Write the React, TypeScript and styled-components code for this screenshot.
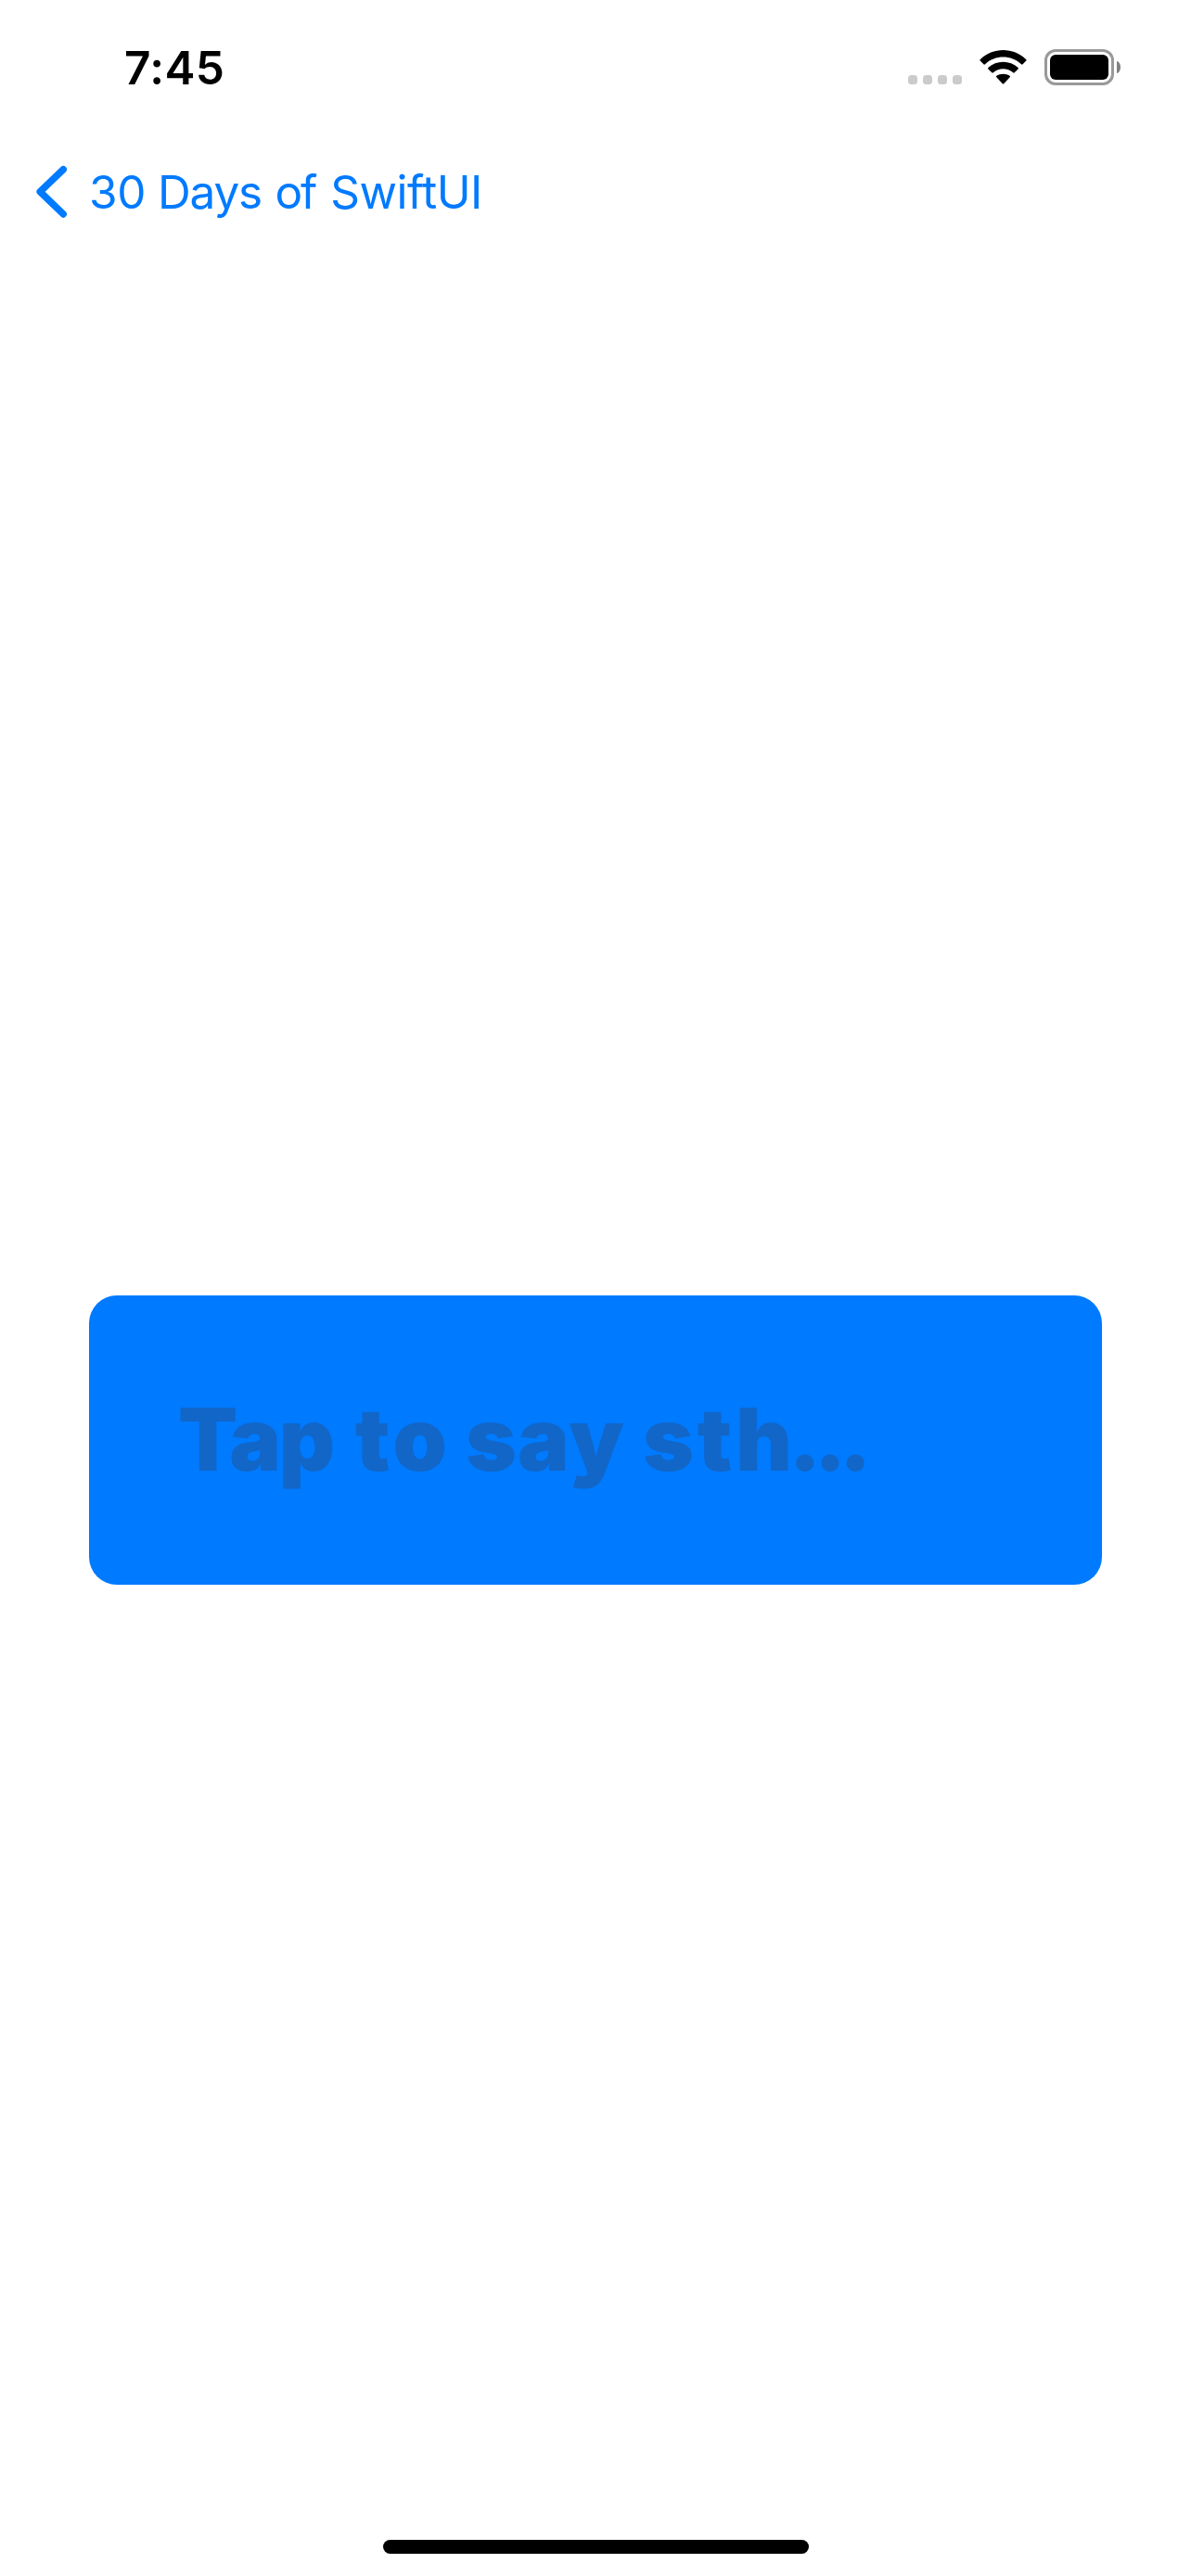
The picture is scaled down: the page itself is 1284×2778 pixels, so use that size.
import React from "react";
import styled, { createGlobalStyle } from "styled-components";

const GlobalStyle = createGlobalStyle`
  * { box-sizing: border-box; }
  body { margin: 0; background: #fff; }
`;

const Screen = styled.div`
  display: flex;
  flex-direction: column;
  width: 1284px;
  height: 2778px;
  background: #fff;
  font-family: Inter, "Liberation Sans", sans-serif;
  overflow: hidden;
`;

const StatusBar = styled.header`
  display: flex;
  align-items: flex-start;
  justify-content: space-between;
  height: 132px;
  padding: 53px 76px 0 134px;
`;

const Time = styled.span`
  font-size: 49.5px;
  line-height: 40px;
  font-weight: 600;
  letter-spacing: 0.4px;
  color: #000;
`;

const Indicators = styled.div`
  display: flex;
  align-items: flex-end;
  height: 39px;
`;

const Signal = styled.div`
  display: flex;
  gap: 6px;
  margin: 0 19px 1px 0;
`;

const SignalDot = styled.i`
  width: 10px;
  height: 10px;
  border-radius: 3.5px;
  background: #cbcbcb;
`;

const WifiIcon = styled.svg`
  display: block;
  width: 51px;
  height: 37px;
  margin: 0 19px 1px 0;
`;

const Battery = styled.div`
  display: flex;
  align-items: center;
  gap: 3px;
`;

const BatteryShell = styled.div`
  width: 75px;
  height: 39px;
  padding: 3px;
  border: 3px solid #999;
  border-radius: 12px;
`;

const BatteryLevel = styled.div`
  height: 100%;
  border-radius: 6px;
  background: #000;
`;

const BatteryCap = styled.div`
  width: 4px;
  height: 13px;
  border-radius: 0 4px 4px 0 / 0 6.5px 6.5px 0;
  background: #808080;
`;

const NavBar = styled.nav`
  height: 132px;
  padding: 46px 0 0 38px;
`;

const BackButton = styled.button`
  display: flex;
  align-items: center;
  gap: 22px;
  padding: 0;
  border: 0;
  background: none;
  color: #007aff;
  font: 400 49.5px/58px Inter, "Liberation Sans", sans-serif;
  white-space: nowrap;
`;

const ChevronIcon = styled.svg`
  display: block;
  width: 36px;
  height: 58px;
`;

const Word = styled.span<{ $tracking: number; $shift?: number }>`
  letter-spacing: ${(p) => p.$tracking}px;
  margin-left: ${(p) => p.$shift ?? 0}px;
`;

const Content = styled.main`
  flex: 1;
  padding: 1133px 96px 0;
`;

const SpeechField = styled.div`
  display: flex;
  align-items: center;
  height: 312px;
  padding: 0 96px 2px;
  border-radius: 30px;
  background: #007aff;
`;

const Placeholder = styled.span`
  color: #1266c7;
  font-size: 93.5px;
  line-height: 114px;
  font-weight: 900;
  white-space: nowrap;
`;

const HomeArea = styled.footer`
  display: flex;
  justify-content: center;
  height: 39px;
`;

const HomeIndicator = styled.div`
  width: 459px;
  height: 15px;
  border-radius: 7.5px;
  background: #000;
`;

export default function App() {
  return (
    <>
      <GlobalStyle />
      <Screen>
        <StatusBar>
          <Time>7:45</Time>
          <Indicators>
            <Signal>
              {[0, 1, 2, 3].map((dot) => (
                <SignalDot key={dot} />
              ))}
            </Signal>
            <WifiIcon viewBox="0 0 51 37" aria-hidden="true">
              <path d="M.7 10.2C14.4-3.4 36.600-3.400 50.300 10.200Q51 10.900 50.300 11.600L46.600 15.300Q45.800 16 45 15.300C34.200 5 16.800 5 6 15.300Q5.200 16 4.400 15.300L.7 11.600Q0 10.900.7 10.200Z" />
              <path d="M9.400 19C18.300 10.700 32.700 10.700 41.600 19Q42.300 19.700 41.600 20.400L37.700 24.300Q37 25 36.200 24.300C30.200 18.900 20.800 18.900 14.800 24.300Q14 25 13.300 24.300L9.400 20.400Q8.700 19.700 9.400 19Z" />
              <path d="M18.300 27.800C22.300 24.900 28.700 24.900 32.700 27.800Q33.400 28.400 32.700 29.200L26.200 36.200Q25.500 37 24.800 36.200L18.300 29.200Q17.600 28.400 18.300 27.800Z" />
            </WifiIcon>
            <Battery>
              <BatteryShell>
                <BatteryLevel />
              </BatteryShell>
              <BatteryCap />
            </Battery>
          </Indicators>
        </StatusBar>
        <NavBar>
          <BackButton>
            <ChevronIcon viewBox="0 0 36 58" fill="none" aria-hidden="true">
              <path
                d="M30.200 4.700L5.200 28.700L30.200 52.900"
                stroke="#007aff"
                strokeWidth="7.500"
                strokeLinecap="round"
                strokeLinejoin="round"
              />
            </ChevronIcon>
            <span>
              <Word $tracking={-0.3}>30</Word>{" "}
              <Word $tracking={-1.2} $shift={-1.1}>Days</Word>{" "}
              <Word $tracking={-2.2} $shift={0.5}>of</Word>{" "}
              <Word $tracking={-0.5} $shift={2.2}>SwiftUI</Word>
            </span>
          </BackButton>
        </NavBar>
        <Content>
          <SpeechField>
            <Placeholder>
              <Word $tracking={-2.2}>Tap</Word>{" "}
              <Word $tracking={4} $shift={5.5}>to</Word>{" "}
              <Word $tracking={1.2} $shift={-2.6}>say</Word>{" "}
              <Word $tracking={3.7} $shift={0.4}>sth</Word>
              <Word $tracking={-7.6} $shift={-7.3}>...</Word>
            </Placeholder>
          </SpeechField>
        </Content>
        <HomeArea>
          <HomeIndicator />
        </HomeArea>
      </Screen>
    </>
  );
}
